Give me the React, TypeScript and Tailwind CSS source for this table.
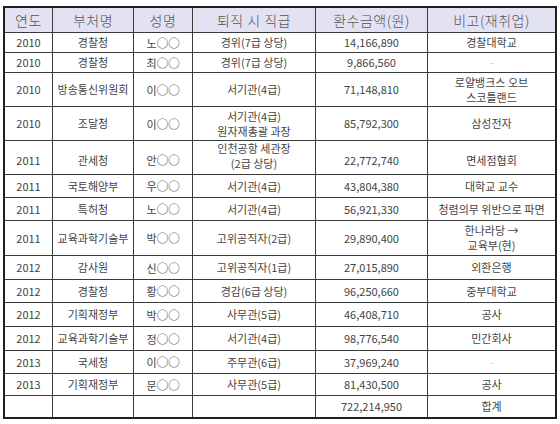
const cols = 'grid grid-cols-[48px_81px_59px_123px_112px_127px]';

type Row = { h: string; cells: React.ReactNode[] };

const dash = <span className="text-[#c4c4c4]">-</span>;

// 이름 가림 표시
const nm = (s: string) => (
  <span>
    {s}
    <span className="text-[12px] tracking-[-0.5px] font-light text-[#777]">〇〇</span>
  </span>
);

const rows: Row[] = [
  { h: 'h-[20px]', cells: ['2010', '경찰청', nm('노'), '경위(7급 상당)', '14,166,890', '경찰대학교'] },
  { h: 'h-[20px]', cells: ['2010', '경찰청', nm('최'), '경위(7급 상당)', '9,866,560', dash] },
  {
    h: 'h-[34px]',
    cells: ['2010', '방송통신위원회', nm('이'), '서기관(4급)', '71,148,810', <>로얄뱅크스 오브<br />스코틀랜드</>],
  },
  {
    h: 'h-[34px]',
    cells: ['2010', '조달청', nm('이'), <>서기관(4급)<br />원자재총괄 과장</>, '85,792,300', '삼성전자'],
  },
  {
    h: 'h-[34px]',
    cells: ['2011', '관세청', nm('안'), <span className="block pb-[8px]">인천공항 세관장<br />(2급 상당)</span>, '22,772,740', '면세점협회'],
  },
  { h: 'h-[23px]', cells: ['2011', '국토해양부', nm('우'), '서기관(4급)', '43,804,380', '대학교 교수'] },
  { h: 'h-[23px]', cells: ['2011', '특허청', nm('노'), '서기관(4급)', '56,921,330', '청렴의무 위반으로 파면'] },
  {
    h: 'h-[35px]',
    cells: ['2011', '교육과학기술부', nm('박'), '고위공직자(2급)', '29,890,400', <>한나라당 →<br />교육부(현)</>],
  },
  { h: 'h-[24px]', cells: ['2012', '감사원', nm('신'), '고위공직자(1급)', '27,015,890', '외환은행'] },
  { h: 'h-[23px]', cells: ['2012', '경찰청', nm('황'), '경감(6급 상당)', '96,250,660', '중부대학교'] },
  { h: 'h-[24px]', cells: ['2012', '기획재정부', nm('박'), '사무관(5급)', '46,408,710', '공사'] },
  { h: 'h-[24px]', cells: ['2012', '교육과학기술부', nm('정'), '서기관(4급)', '98,776,540', '민간회사'] },
  { h: 'h-[23px]', cells: ['2013', '국세청', nm('이'), '주무관(6급)', '37,969,240', dash] },
  { h: 'h-[22px]', cells: ['2013', '기획재정부', nm('문'), '사무관(5급)', '81,430,500', '공사'] },
  { h: 'h-[21px]', cells: ['', '', '', '', '722,214,950', '합계'] },
];

const headers = ['연도', '부처명', '성명', '퇴직 시 직급', '환수금액(원)', '비고(재취업)'];

export default function App() {
  return (
    <div className="w-[560px] h-[424px] bg-white pt-[6px] pl-[3px] font-['Noto_Sans_CJK_KR','Noto_Sans',sans-serif]">
      <div className="w-[554px] border-2 border-[#1e1e1e]">
        {/* 헤더 */}
        <div className={`${cols} h-[25px] bg-[#e2e2f2] border-b border-[#3a3a3a]`}>
          {headers.map((t, i) => (
            <div
              key={t}
              className={`flex items-center justify-center text-[14px] tracking-[0.5px] font-light text-[#555] ${i < 5 ? 'border-r border-[#3a3a3a]' : ''}`}
            >
              {t}
            </div>
          ))}
        </div>

        {/* 본문 */}
        {rows.map((r, ri) => (
          <div
            key={ri}
            className={`${cols} ${r.h} ${ri < rows.length - 1 ? 'border-b border-[#3a3a3a]' : ''}`}
          >
            {r.cells.map((c, ci) => (
              <div
                key={ci}
                className={`flex items-center justify-center text-center text-[11px] leading-[15px] text-[#444] ${ci < 5 ? 'border-r border-[#3a3a3a]' : ''}`}
              >
                {c}
              </div>
            ))}
          </div>
        ))}
      </div>
    </div>
  );
}
